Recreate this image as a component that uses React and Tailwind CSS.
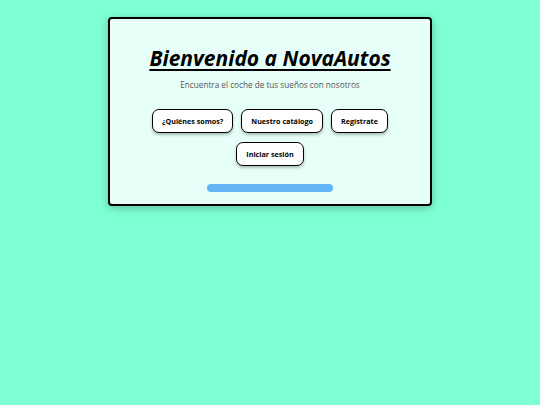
import React from 'react';

const BUTTONS = ['¿Quiénes somos?', 'Nuestro catálogo', 'Regístrate'];

function NavButton({ children }) {
  return (
    <button className="h-[24px] px-[9px] rounded-[7px] border border-black bg-white text-[7.2px] font-bold text-black shadow-[0_2px_3px_rgba(0,0,0,0.25)]">
      {children}
    </button>
  );
}

export default function App() {
  return (
    <div className="min-h-[405px] bg-[#7fffd4] pt-[17px]" style={{ fontFamily: "'Open Sans', 'Liberation Sans', sans-serif" }}>
      <div className="mx-auto w-[324px] h-[189px] rounded-[4px] border-2 border-black bg-[#e6fff8] shadow-[0_2px_8px_rgba(0,0,0,0.25)] flex flex-col items-center pt-[25px]">
        <h1 className="text-[21px] leading-[28px] font-bold italic underline decoration-[1.5px] underline-offset-[3px] text-black">
          Bienvenido a NovaAutos
        </h1>
        <p className="mt-[7px] text-[8.2px] text-[#555] leading-[12px]">Encuentra el coche de tus sueños con nosotros</p>
        <div className="mt-[18px] flex justify-center gap-[8px]">
          {BUTTONS.map((b) => (
            <NavButton key={b}>{b}</NavButton>
          ))}
        </div>
        <div className="mt-[9px] flex">
          <NavButton>Iniciar sesión</NavButton>
        </div>
        <div className="mt-[18px] w-[126px] h-[8px] rounded-full bg-[#64b5f6]" />
      </div>
    </div>
  );
}
